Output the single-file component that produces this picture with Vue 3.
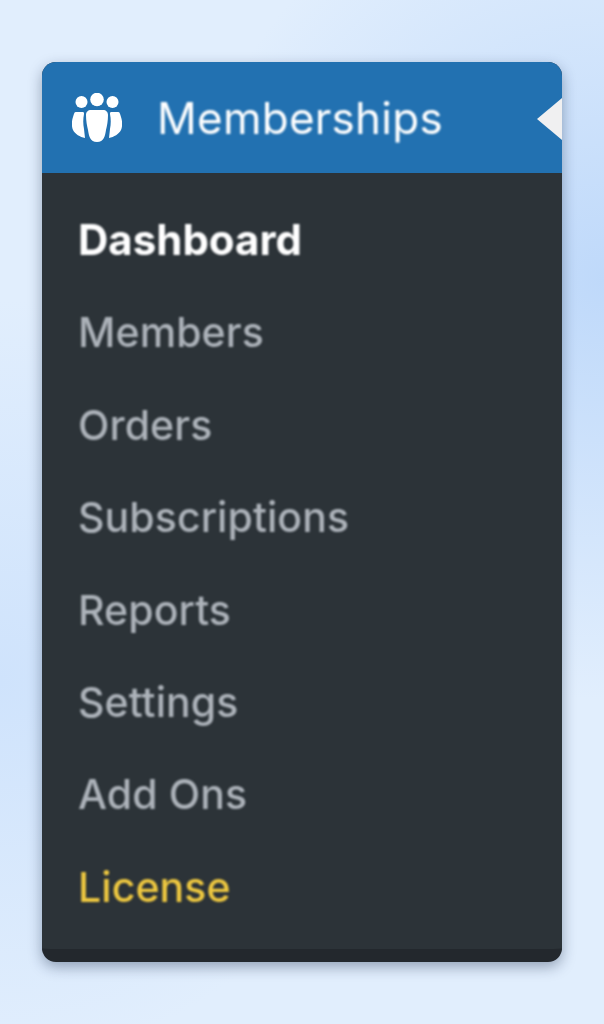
<template>
  <div class="page">
    <div class="menu">
      <div class="head">
        <svg class="icon" viewBox="0 0 50 50" aria-hidden="true">
          <circle cx="25" cy="6.5" r="6.8" />
          <circle cx="9.5" cy="9" r="6" />
          <circle cx="40.5" cy="9" r="6" />
          <path d="M4 19h7c1 0 1 1 1 2-1 5-1 10 0 15l1 9c-5-1-10-4-12-8-2-5-1-10 0-13 1-3 1-5 3-5z" />
          <path d="M46 19h-7c-1 0-1 1-1 2 1 5 1 10 0 15l-1 9c5-1 10-4 12-8 2-5 1-10 0-13-1-3-1-5-3-5z" />
          <path d="M19 17h12c3 0 5 2 5 5 0 6-1 11-2 15-1 6-2 12-9 12s-8-6-9-12c-1-4-2-9-2-15 0-3 2-5 5-5z" />
        </svg>
        <span class="title">Memberships</span>
        <span class="arrow"></span>
      </div>
      <ul class="items">
        <li
          v-for="item in items"
          :key="item.label"
          :class="item.kind"
        >{{ item.label }}</li>
      </ul>
    </div>
  </div>
</template>

<script setup>
const items = [
  { label: 'Dashboard', kind: 'current' },
  { label: 'Members', kind: '' },
  { label: 'Orders', kind: '' },
  { label: 'Subscriptions', kind: '' },
  { label: 'Reports', kind: '' },
  { label: 'Settings', kind: '' },
  { label: 'Add Ons', kind: '' },
  { label: 'License', kind: 'license' }
];
</script>

<style>
body {
  margin: 0;
}
</style>

<style scoped>
.page {
  box-sizing: border-box;
  width: 604px;
  height: 1024px;
  padding: 62px 42px;
  background:
    radial-gradient(circle 420px at 604px 280px, #bfd9fa 0%, rgba(191, 217, 250, 0) 100%),
    radial-gradient(circle 380px at 0 680px, #cfe3fc 0%, rgba(207, 227, 252, 0) 100%),
    #e1eefd;
  font-family: "Inter", "Liberation Sans", sans-serif;
}

.menu {
  box-sizing: border-box;
  height: 900px;
  border-radius: 14px;
  overflow: hidden;
  background: #2c3338;
  box-shadow: 0 5px 14px rgba(20, 40, 70, 0.38);
  border-bottom: 13px solid #23282d;
}

.head {
  display: flex;
  align-items: center;
  height: 111px;
  padding-left: 30px;
  background: #2271b1;
  position: relative;
}

.icon {
  width: 50px;
  height: 50px;
  fill: #fff;
  flex: none;
  filter: blur(0.7px);
}

.title {
  margin-left: 35px;
  font-size: 44px;
  letter-spacing: 0.25px;
  color: #fff;
  filter: blur(0.8px);
}

.arrow {
  position: absolute;
  right: 0;
  top: 36px;
  border-style: solid;
  border-width: 21px 25px 21px 0;
  border-color: transparent #f0f0f1 transparent transparent;
}

.items {
  list-style: none;
  margin: 0;
  padding: 21px 0 0 36px;
}

.items li {
  height: 92.4px;
  line-height: 92.4px;
  font-size: 41px;
  font-weight: 500;
  letter-spacing: 0.08px;
  color: #adb3ba;
  filter: blur(0.8px);
}

.items li.current {
  font-size: 42px;
  letter-spacing: 0;
  color: #fff;
  font-weight: 700;
}

.items li.license {
  color: #eec840;
}
</style>
